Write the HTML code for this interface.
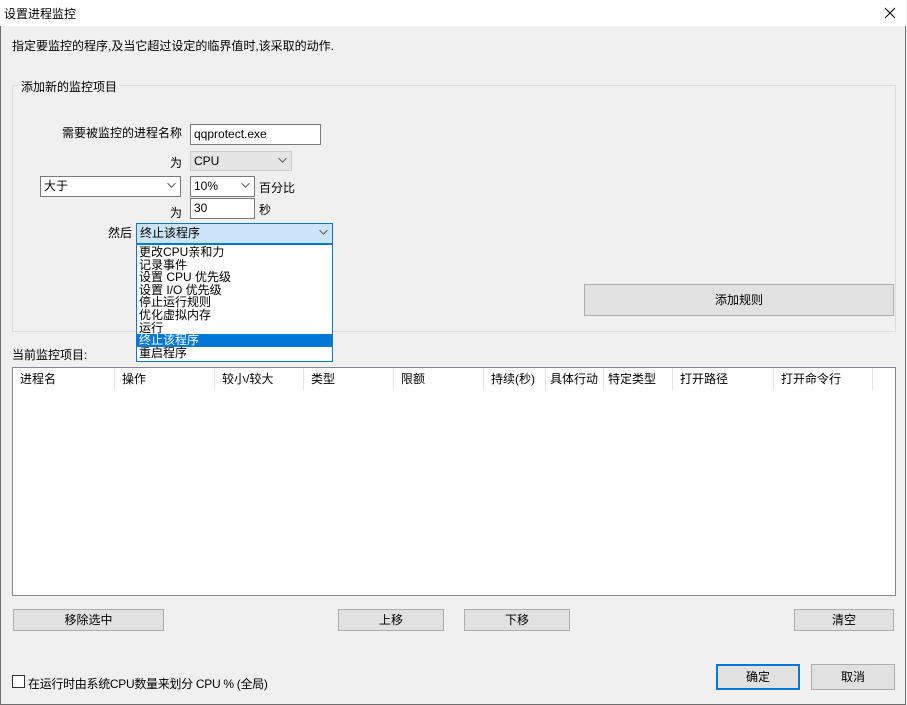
<!DOCTYPE html>
<html><head><meta charset="utf-8"><style>
*{box-sizing:border-box;margin:0;padding:0}
body{width:907px;height:705px;position:relative;background:#f0f0f0;font:12px "Liberation Sans","Noto Sans CJK SC",sans-serif;color:#000;overflow:hidden}
.a{position:absolute;white-space:nowrap}
.win{position:absolute;left:0;top:0;width:906px;height:705px;border:1px solid #6e6e6e;border-top:none;background:#f0f0f0}
.title{position:absolute;left:0;top:0;width:906px;height:26px;background:#fff}
.btn{position:absolute;background:#e1e1e1;border:1px solid #adadad;text-align:center;line-height:20px}
.inp{position:absolute;background:#fff;border:1px solid #7a7a7a;padding-left:3px;line-height:18px}
.cb{position:absolute;background:#fff;border:1px solid #7a7a7a;padding-left:3px;line-height:18px}
.chev{position:absolute;right:5px;top:6px;width:7px;height:7px;border-right:1px solid #444;border-bottom:1px solid #444;transform:rotate(45deg) scale(.85);transform-origin:center;margin-top:-3px}
.hd{position:absolute;top:0;height:22px;line-height:22px;padding-left:7px;border-right:1px solid #e5e5e5}
</style></head><body>
<div class="win"></div>
<div class="title"></div>
<div class="a" style="left:4px;top:5px">设置进程监控</div>
<svg class="a" style="left:884px;top:7px" width="12" height="12"><path d="M1 1L11 11M11 1L1 11" stroke="#000" stroke-width="1.1"/></svg>
<div class="a" style="left:12px;top:37px">指定要监控的程序,及当它超过设定的临界值时,该采取的动作.</div>
<div class="a" style="left:12px;top:85px;width:884px;height:247px;border:1px solid #dcdcdc"></div>
<div class="a" style="left:18px;top:78px;background:#f0f0f0;padding:0 3px">添加新的监控项目</div>
<div class="a" style="left:62px;top:124px">需要被监控的进程名称</div>
<div class="inp" style="left:190px;top:124px;width:131px;height:21px">qqprotect.exe</div>
<div class="a" style="left:170px;top:154px">为</div>
<div class="cb" style="left:190px;top:151px;width:102px;height:20px;background:#e5e5e5;border-color:#ccc">CPU<span class="chev"></span></div>
<div class="cb" style="left:40px;top:176px;width:141px;height:21px">大于<span class="chev"></span></div>
<div class="cb" style="left:190px;top:176px;width:65px;height:21px">10%<span class="chev"></span></div>
<div class="a" style="left:259px;top:179px">百分比</div>
<div class="a" style="left:170px;top:204px">为</div>
<div class="inp" style="left:190px;top:198px;width:65px;height:21px">30</div>
<div class="a" style="left:259px;top:201px">秒</div>
<div class="a" style="left:108px;top:224px">然后</div>
<div class="cb" style="left:136px;top:223px;width:197px;height:21px;background:#cce4f7;border-color:#0078d7">终止该程序<span class="chev"></span></div>
<div class="a" style="left:136px;top:244px;width:197px;height:118px;background:#fff;border:1px solid #0078d7;line-height:12.6px;font-size:12px;padding-top:1px;z-index:2">
<div style="padding-left:2px">更改CPU亲和力</div>
<div style="padding-left:2px">记录事件</div>
<div style="padding-left:2px">设置 CPU 优先级</div>
<div style="padding-left:2px">设置 I/O 优先级</div>
<div style="padding-left:2px">停止运行规则</div>
<div style="padding-left:2px">优化虚拟内存</div>
<div style="padding-left:2px">运行</div>
<div style="padding-left:2px;background:#0078d7;color:#fff">终止该程序</div>
<div style="padding-left:2px">重启程序</div>
</div>
<div class="btn" style="left:584px;top:284px;width:310px;height:32px;line-height:30px">添加规则</div>
<div class="a" style="left:12px;top:346px">当前监控项目:</div>
<div class="a" style="left:12px;top:367px;width:884px;height:229px;background:#fff;border:1px solid #828790">
<div class="hd" style="left:0;width:102px">进程名</div>
<div class="hd" style="left:102px;width:100px">操作</div>
<div class="hd" style="left:202px;width:89px">较小/较大</div>
<div class="hd" style="left:291px;width:90px">类型</div>
<div class="hd" style="left:381px;width:90px">限额</div>
<div class="hd" style="left:471px;width:62px">持续(秒)</div>
<div class="hd" style="left:533px;width:58px;padding-left:4px">具体行动</div>
<div class="hd" style="left:591px;width:69px;padding-left:4px">特定类型</div>
<div class="hd" style="left:660px;width:101px">打开路径</div>
<div class="hd" style="left:761px;width:99px">打开命令行</div>
</div>
<div class="btn" style="left:13px;top:609px;width:151px;height:22px">移除选中</div>
<div class="btn" style="left:338px;top:609px;width:106px;height:22px">上移</div>
<div class="btn" style="left:464px;top:609px;width:106px;height:22px">下移</div>
<div class="btn" style="left:794px;top:609px;width:100px;height:22px">清空</div>
<div class="a" style="left:12px;top:675px;width:13px;height:13px;border:1px solid #333;background:#fff"></div>
<div class="a" style="left:28px;top:675px;letter-spacing:-0.3px">在运行时由系统CPU数量来划分 CPU % (全局)</div>
<div class="btn" style="left:716px;top:664px;width:84px;height:26px;line-height:22px;border:2px solid #0078d7">确定</div>
<div class="btn" style="left:811px;top:664px;width:84px;height:26px;line-height:24px">取消</div>
</body></html>
